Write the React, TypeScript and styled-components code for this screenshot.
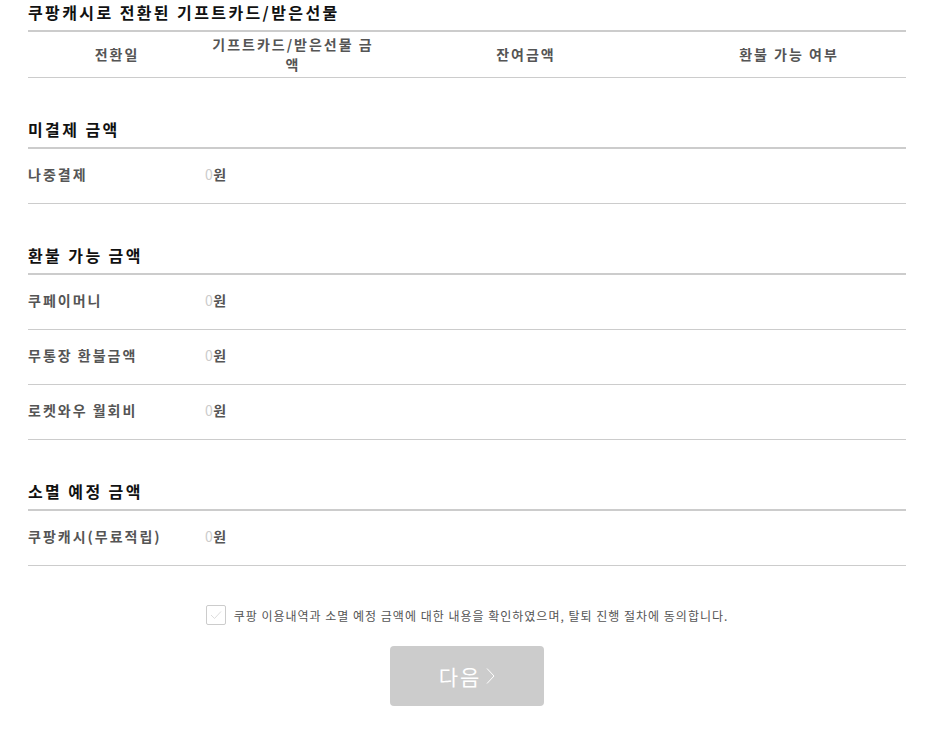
import React from "react";
import styled, { createGlobalStyle } from "styled-components";

const Global = createGlobalStyle`
  html, body { margin: 0; padding: 0; background: #fff; }
  body { font-family: "Noto Sans CJK KR", "Noto Sans", sans-serif; color: #333; }
  * { box-sizing: border-box; }
`;

const Page = styled.div`
  width: 878px;
  margin: 1px 0 0 28px;
  padding-bottom: 28px;
`;

const SectionTitle = styled.h3<{ $first?: boolean }>`
  margin: ${(p) => (p.$first ? "0" : "40px")} 0 0;
  font-size: 16px;
  font-weight: bold;
  letter-spacing: 2.4px;
  line-height: 22px;
  height: 29px;
  padding-bottom: 7px;
  color: #111;
`;

const Table = styled.div`
  border-top: 2px solid #ccc;
`;

const HeadRow = styled.div`
  display: grid;
  grid-template-columns: 178px 174px 292px 234px;
  height: 46px;
  align-items: center;
  border-bottom: 1px solid #ccc;
`;

const HeadCell = styled.div`
  text-align: center;
  font-size: 14px;
  font-weight: bold;
  letter-spacing: 2px;
  line-height: 20px;
  color: #555;
  padding: 0 3px 2px;
  word-break: break-all;
`;

const Row = styled.div`
  display: grid;
  grid-template-columns: 177px 1fr;
  height: 55px;
  align-items: center;
  border-bottom: 1px solid #ccc;
  font-size: 14px;
  font-weight: bold;
  letter-spacing: 2px;
  color: #555;
`;

const Label = styled.div`
  padding-bottom: 4px;
`;

const Value = styled.div`
  padding-bottom: 4px;
  letter-spacing: 0.5px;
`;

const Zero = styled.span`
  color: #ccc;
  font-weight: normal;
`;

const Agree = styled.label`
  display: flex;
  align-items: center;
  justify-content: center;
  gap: 8px;
  margin-top: 39px;
  font-size: 12px;
  letter-spacing: 1px;
  color: #555;
`;

const Box = styled.span`
  width: 20px;
  height: 20px;
  border: 1px solid #ccc;
  border-radius: 2px;
  display: flex;
  align-items: center;
  justify-content: center;
  background: #fff;
`;

const ButtonWrap = styled.div`
  display: flex;
  justify-content: center;
  margin-top: 21px;
`;

const NextButton = styled.button`
  width: 154px;
  height: 60px;
  border: none;
  border-radius: 4px;
  background: #ccc;
  color: #fff;
  font-family: inherit;
  font-size: 21px;
  letter-spacing: 2px;
  display: flex;
  align-items: center;
  justify-content: center;
  gap: 5px;
  padding: 0;
`;

const amounts: { title: string; rows: string[] }[] = [
  { title: "미결제 금액", rows: ["나중결제"] },
  { title: "환불 가능 금액", rows: ["쿠페이머니", "무통장 환불금액", "로켓와우 월회비"] },
  { title: "소멸 예정 금액", rows: ["쿠팡캐시(무료적립)"] },
];

export default function App() {
  return (
    <Page>
      <Global />
      <SectionTitle $first>쿠팡캐시로 전환된 기프트카드/받은선물</SectionTitle>
      <Table>
        <HeadRow>
          <HeadCell>전환일</HeadCell>
          <HeadCell>기프트카드/받은선물 금액</HeadCell>
          <HeadCell>잔여금액</HeadCell>
          <HeadCell>환불 가능 여부</HeadCell>
        </HeadRow>
      </Table>
      {amounts.map((s) => (
        <React.Fragment key={s.title}>
          <SectionTitle>{s.title}</SectionTitle>
          <Table>
            {s.rows.map((r) => (
              <Row key={r}>
                <Label>{r}</Label>
                <Value>
                  <Zero>0</Zero>원
                </Value>
              </Row>
            ))}
          </Table>
        </React.Fragment>
      ))}
      <Agree>
        <Box>
          <svg width="12" height="10" viewBox="0 0 12 10">
            <path d="M1 5 L4.5 8.5 L11 1.5" fill="none" stroke="#ddd" strokeWidth="1" />
          </svg>
        </Box>
        쿠팡 이용내역과 소멸 예정 금액에 대한 내용을 확인하였으며, 탈퇴 진행 절차에 동의합니다.
      </Agree>
      <ButtonWrap>
        <NextButton>
          다음
          <svg width="9" height="18" viewBox="0 0 9 18">
            <path d="M1 1.5 L8 9 L1 16.5" fill="none" stroke="#fff" strokeWidth="1" />
          </svg>
        </NextButton>
      </ButtonWrap>
    </Page>
  );
}
